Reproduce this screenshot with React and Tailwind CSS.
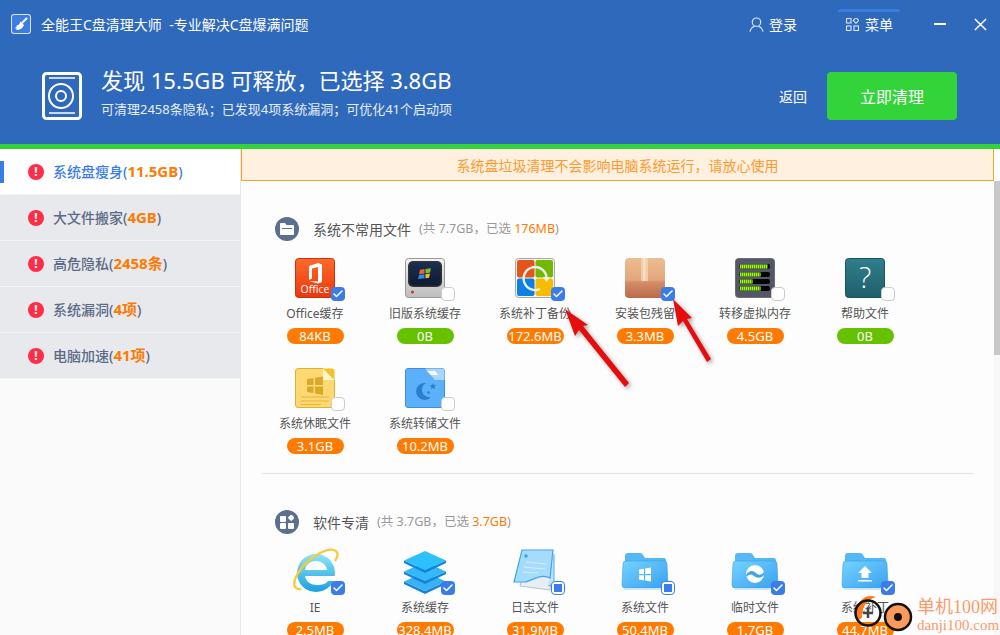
import { Check } from 'lucide-react';

const font = "font-['Noto_Sans','Noto_Sans_CJK_SC',sans-serif]";

const sideItems = [
  { name: '系统盘瘦身', num: '11.5GB', active: true },
  { name: '大文件搬家', num: '4GB' },
  { name: '高危隐私', num: '2458', unit: '条' },
  { name: '系统漏洞', num: '4', unit: '项' },
  { name: '电脑加速', num: '41', unit: '项' },
];

function OfficeIcon() {
  return (
    <svg viewBox="0 0 40 40" className="w-10 h-10">
      <defs>
        <linearGradient id="off" x1="0" y1="0" x2="0" y2="1">
          <stop offset="0" stopColor="#ff6a2a" />
          <stop offset="1" stopColor="#e8380e" />
        </linearGradient>
      </defs>
      <rect x="0.5" y="0.5" width="39" height="39" rx="3" fill="url(#off)" stroke="#d2300c" />
      <path d="M14 8 L23 5 L27 6.5 V24 L23 25.5 L14 23 L23 23.5 V9 L17 10.5 V20.5 L14 22 Z" fill="#fff" />
      <text x="20" y="35" textAnchor="middle" fontSize="10.5" fontWeight="500" fill="#fff" fontFamily="Open Sans">Office</text>
    </svg>
  );
}

function OldPcIcon() {
  return (
    <svg viewBox="0 0 40 40" className="w-10 h-10">
      <defs>
        <linearGradient id="pc" x1="0" y1="0" x2="0" y2="1">
          <stop offset="0" stopColor="#f2f2f2" />
          <stop offset="1" stopColor="#bdbdbd" />
        </linearGradient>
        <linearGradient id="scr" x1="0" y1="0" x2="0" y2="1">
          <stop offset="0" stopColor="#1b2f52" />
          <stop offset="1" stopColor="#0e1a30" />
        </linearGradient>
      </defs>
      <rect x="0.5" y="0.5" width="39" height="39" rx="3" fill="url(#pc)" stroke="#999" />
      <rect x="3" y="3" width="34" height="26" rx="5" fill="#333" />
      <rect x="4.5" y="4.5" width="31" height="23" rx="4" fill="url(#scr)" />
      <g transform="translate(0 3) scale(1 0.8)">
        <path d="M15 11 L19.5 10 V15.5 L14 16.5 Z" fill="#e8623a" />
        <path d="M20.5 10 L26 9 L25 14.5 L20.5 15.5 Z" fill="#7fbf2a" />
        <path d="M14 17.5 L19.5 16.5 V21.5 L13 22.5 Z" fill="#2f8ae8" />
        <path d="M20.5 16.5 L25 15.5 L24 21 L20.5 21.5 Z" fill="#f2c21a" />
      </g>
      <circle cx="7.5" cy="34" r="1.6" fill="#d23a2a" />
    </svg>
  );
}

function PatchIcon() {
  return (
    <svg viewBox="0 0 40 40" className="w-10 h-10">
      <rect x="0.5" y="0.5" width="39" height="39" rx="3" fill="#f4f4f4" stroke="#a8a8a8" />
      <rect x="2" y="2" width="17.5" height="17.5" rx="2" fill="#e5541a" />
      <rect x="20.5" y="2" width="17.5" height="17.5" rx="2" fill="#72b800" />
      <rect x="2" y="20.5" width="17.5" height="17.5" rx="2" fill="#0f7fe0" />
      <rect x="20.5" y="20.5" width="17.5" height="17.5" rx="2" fill="#f7bb00" />
      <path d="M31.5 19 A11.5 11.5 0 1 0 25 31" fill="none" stroke="#e9f2ee" strokeWidth="2.4" />
      <path d="M28 19 L35 19 L31.5 24 Z" fill="#e9f2ee" />
    </svg>
  );
}

function BoxIcon() {
  return (
    <svg viewBox="0 0 40 40" className="w-10 h-10">
      <defs>
        <linearGradient id="bx" x1="0" y1="0" x2="0" y2="1">
          <stop offset="0" stopColor="#edbd92" />
          <stop offset="0.55" stopColor="#e3a77c" />
          <stop offset="0.6" stopColor="#d58e68" />
          <stop offset="1" stopColor="#b96a4a" />
        </linearGradient>
      </defs>
      <rect width="40" height="40" rx="4" fill="url(#bx)" />
      <rect x="16" y="0" width="7" height="23" fill="#f4d3b2" fillOpacity="0.8" />
      <rect x="18" y="0" width="2.5" height="23" fill="#fff" fillOpacity="0.35" />
    </svg>
  );
}

function MemoryIcon() {
  const bars = [
    { y: 6, w: 28 },
    { y: 14, w: 21 },
    { y: 21, w: 13 },
    { y: 28, w: 21 },
  ];
  return (
    <svg viewBox="0 0 40 40" className="w-10 h-10">
      <rect x="0.5" y="0.5" width="39" height="39" rx="3" fill="#56566a" stroke="#6d6d7a" />
      {bars.map((b) => (
        <g key={b.y}>
          <rect x="4" y={b.y} width="31" height="5" rx="2" fill="#050505" />
          <rect x="4.5" y={b.y} width={b.w} height="5" fill="#3d7a08" />
          <line x1="5" x2={4.5 + b.w} y1={b.y + 2.5} y2={b.y + 2.5} stroke="#a6f02a" strokeWidth="3.4" strokeDasharray="1.3 0.7" />
        </g>
      ))}
    </svg>
  );
}

function HelpIcon() {
  return (
    <svg viewBox="0 0 40 40" className="w-10 h-10">
      <defs>
        <linearGradient id="hp" x1="0" y1="0" x2="0" y2="1">
          <stop offset="0" stopColor="#2f7f8c" />
          <stop offset="1" stopColor="#1f5f6b" />
        </linearGradient>
      </defs>
      <rect x="0.5" y="0.5" width="39" height="39" rx="3" fill="url(#hp)" stroke="#1b5560" />
      <text x="20" y="30" textAnchor="middle" fontSize="29" fontWeight="300" fill="#fff" fontFamily="Open Sans">?</text>
    </svg>
  );
}

function HibernateIcon() {
  return (
    <svg viewBox="0 0 40 40" className="w-10 h-10">
      <path d="M3 0.5 H28 L39.5 12 V37 A2.5 2.5 0 0 1 37 39.5 H3 A2.5 2.5 0 0 1 0.5 37 V3 A2.5 2.5 0 0 1 3 0.5 Z" fill="#ffd873" stroke="#e0b22e" />
      <path d="M28 0.5 L39.5 12 H28 Z" fill="#fff6c8" />
      <path d="M28 0.5 H37 A2.5 2.5 0 0 1 39.5 3 V12 Z" fill="#f5c02e" />
      <path d="M12 11 L18.5 10 V17 H12 Z M20 9.8 L28 8.5 V17 H20 Z M12 18.5 H18.5 V25 L12 24 Z M20 18.5 H28 V27 L20 25.4 Z" fill="#d8a92a" />
      <path d="M6 29 H34 M6 33 H34 M6 36.5 H26" stroke="#e2b640" strokeWidth="1" />
    </svg>
  );
}

function DumpIcon() {
  return (
    <svg viewBox="0 0 40 40" className="w-10 h-10">
      <path d="M3 0.5 H37 A2.5 2.5 0 0 1 39.5 3 V37 A2.5 2.5 0 0 1 37 39.5 H3 A2.5 2.5 0 0 1 0.5 37 V3 A2.5 2.5 0 0 1 3 0.5 Z" fill="#5cb0fa" stroke="#3f8fe0" />
      <path d="M20 0.5 H37 A2.5 2.5 0 0 1 39.5 3 V12 H30 Z" fill="#a9d6fb" />
      <path d="M22 3 H30 L33 7 H26 Z" fill="#fff" />
      <path d="M21 15 A8.5 8.5 0 1 0 26 29 A7.5 7.5 0 0 1 21 15 Z" fill="#2a7fd0" />
      <path d="M28 15 l.9 2 2.2 .3 -1.6 1.5 .4 2.2 -1.9 -1 -1.9 1 .4 -2.2 -1.6 -1.5 2.2 -.3 Z" fill="#2a7fd0" />
      <circle cx="23.5" cy="24.5" r="1.3" fill="#2a7fd0" />
    </svg>
  );
}

function IeIcon() {
  return (
    <svg viewBox="0 0 40 40" className="w-10 h-10 overflow-visible">
      <defs>
        <linearGradient id="ie" x1="0" y1="0" x2="0" y2="1">
          <stop offset="0" stopColor="#8fe4f7" />
          <stop offset="1" stopColor="#1b9fe0" />
        </linearGradient>
      </defs>
      <circle cx="21" cy="21" r="19" fill="url(#ie)" />
      <path d="M10 18 C11 12 16 9 21 9 C26 9 31 12 32 18 Z" fill="#fdfdfd" />
      <path d="M10 24 H42 V29 H33 C31 32 27 33 22 33 C16 33 11 30 10 24 Z" fill="#fdfdfd" />
      <path d="M6 37 C-2 38 -4 30 6 17 C16 4 34 -6 41 -1 C44 2 42 6 40 9" fill="none" stroke="#f7cc3a" strokeWidth="2.4" />
    </svg>
  );
}

function LayersIcon() {
  const tops = [26, 16, 5];
  const fills = ['#3ab0f5', '#35b8f8', '#2cc0ff'];
  return (
    <svg viewBox="0 0 46 46" className="w-[46px] h-[46px] -mt-[4px] -ml-[3px]">
      {tops.map((y, i) => (
        <g key={y}>
          <path d={`M23 ${y + 17} L44 ${y + 7.5} V${y + 10} L23 ${y + 20} L2 ${y + 10} V${y + 7.5} Z`} fill="#1384d8" />
          <path d={`M23 ${y - 2} L44 ${y + 7.5} L23 ${y + 17} L2 ${y + 7.5} Z`} fill={fills[i]} />
        </g>
      ))}
    </svg>
  );
}

function LogIcon() {
  return (
    <svg viewBox="0 0 46 46" className="w-[46px] h-[46px] -mt-[4px] -ml-[3px]">
      <path d="M8 38 L38 42 L42 12 L16 6 Z" fill="#e8eef4" stroke="#b5c4d2" />
      <path d="M42 6 L42 36 L36 38" fill="#bfe2fa" stroke="#55aef0" />
      <path d="M10 2 L41 2 L38 30 C30 26 24 30 14 34 L2 34 Z" fill="#a6dcfb" stroke="#3fa4f0" strokeWidth="1.2" />
      <path d="M14 14 L35 16 M12 19 L33 21 M11 24 L26 25" stroke="#d3eefc" strokeWidth="1" />
      <circle cx="14" cy="8" r="1.8" fill="#3fa4f0" />
    </svg>
  );
}

function FolderIcon({ children, id }) {
  return (
    <svg viewBox="0 0 48 40" className="w-[48px] h-10 -ml-1">
      <defs>
        <linearGradient id={id} x1="0" y1="0" x2="1" y2="1">
          <stop offset="0" stopColor="#74d3ff" />
          <stop offset="1" stopColor="#3aa0f0" />
        </linearGradient>
      </defs>
      <path d="M4 9 V4 A3 3 0 0 1 7 1 H19 A3 3 0 0 1 22 3 L24 6 H43 A2 2 0 0 1 45 8 V12 H4 Z" fill="#55b8f5" />
      <path d="M2 12 A3 3 0 0 1 5 9 H43 A3 3 0 0 1 46 12 L47 33 A3 3 0 0 1 44 36 H4 A3 3 0 0 1 1 33 Z" fill={`url(#${id})`} stroke="#3b9cea" strokeWidth="0.6" />
      <rect x="3" y="36" width="42" height="2" rx="1" fill="#cfe6f7" />
      {children}
    </svg>
  );
}

function WinFolder() {
  return (
    <FolderIcon id="f1">
      <path d="M18 17.5 L23 16.7 V22 H18 Z M24.2 16.5 L30 15.5 V22 H24.2 Z M18 23.2 H23 V28.4 L18 27.6 Z M24.2 23.2 H30 V29.6 L24.2 28.6 Z" fill="#fff" />
    </FolderIcon>
  );
}

function SwirlFolder() {
  return (
    <FolderIcon id="f2">
      <circle cx="24" cy="22" r="9" fill="#fff" />
      <path d="M15 23 C19 17 23 19 25 21 C28 24 31 23 33 20 L33 23 C29 27 26 26 23 24 C20 22 18 22 15.5 25 Z" fill="#3fa2ee" />
    </FolderIcon>
  );
}

function UploadFolder() {
  return (
    <FolderIcon id="f3">
      <path d="M24 14 L31 21 H27.5 V26 H20.5 V21 H17 Z" fill="#fff" />
      <rect x="17" y="28" width="14" height="1.5" fill="#fff" />
    </FolderIcon>
  );
}

const unusedFiles = [
  { name: 'Office缓存', size: '84KB', icon: OfficeIcon, state: 'on' },
  { name: '旧版系统缓存', size: '0B', icon: OldPcIcon, state: 'off', green: true },
  { name: '系统补丁备份', size: '172.6MB', icon: PatchIcon, state: 'on' },
  { name: '安装包残留', size: '3.3MB', icon: BoxIcon, state: 'on' },
  { name: '转移虚拟内存', size: '4.5GB', icon: MemoryIcon, state: 'off' },
  { name: '帮助文件', size: '0B', icon: HelpIcon, state: 'off', green: true },
  { name: '系统休眠文件', size: '3.1GB', icon: HibernateIcon, state: 'off' },
  { name: '系统转储文件', size: '10.2MB', icon: DumpIcon, state: 'off' },
];

const softFiles = [
  { name: 'IE', size: '2.5MB', icon: IeIcon, state: 'on' },
  { name: '系统缓存', size: '328.4MB', icon: LayersIcon, state: 'on' },
  { name: '日志文件', size: '31.9MB', icon: LogIcon, state: 'part' },
  { name: '系统文件', size: '50.4MB', icon: WinFolder, state: 'part' },
  { name: '临时文件', size: '1.7GB', icon: SwirlFolder, state: 'on' },
  { name: '系统补丁', size: '44.7MB', icon: UploadFolder, state: 'on' },
];

function Tick({ state }) {
  if (state === 'on') {
    return (
      <span className="absolute left-9 top-[29px] w-3.5 h-3.5 rounded-sm bg-[#3b7de8] flex items-center justify-center">
        <Check className="w-3 h-3 text-white" strokeWidth={3} />
      </span>
    );
  }
  if (state === 'part') {
    return (
      <span className="absolute left-9 top-[29px] w-3.5 h-3.5 rounded-sm bg-white border border-[#3b7de8] flex items-center justify-center">
        <span className="w-2 h-2 bg-[#3b7de8]" />
      </span>
    );
  }
  return <span className="absolute left-9 top-[29px] w-3.5 h-3.5 rounded-sm bg-white border border-[#cccccc]" />;
}

function FileItem({ item }) {
  const Icon = item.icon;
  return (
    <div className="flex flex-col items-center w-[110px]">
      <div className="relative w-10 h-10">
        <Icon />
        <Tick state={item.state} />
      </div>
      <div className="mt-2 h-4 leading-4 text-[12px] text-[#555555] whitespace-nowrap">{item.name}</div>
      <div className={`mt-1.5 w-[57px] h-4 rounded-full leading-4 text-center text-[13px] text-white ${item.green ? 'bg-[#66c200]' : 'bg-[#ff7a00]'}`}>
        {item.size}
      </div>
    </div>
  );
}

function SectionHead({ icon, title, total, picked }) {
  return (
    <div className="ml-[34px] flex items-center h-6">
      <span className="w-6 h-6 rounded-full bg-[#5b6f8f] flex items-center justify-center">{icon}</span>
      <span className="ml-3.5 text-[14px] text-[#555555]">{title}</span>
      <span className="ml-2 text-[12.5px] text-[#999999] whitespace-nowrap">
        (共 {total}，已选 <span className="text-[#ff7a00]">{picked}</span>)
      </span>
    </div>
  );
}

function Arrows() {
  return (
    <svg className="absolute left-0 top-0 w-[1000px] h-[635px] pointer-events-none drop-shadow-[2px_2px_2px_rgba(0,0,0,0.35)]" viewBox="0 0 1000 635">
      <path d="M565 309 L588 325 L583 326 L629 383 L625 387 L579 330 L575 336 Z" fill="#e60d0d" />
      <path d="M673 299 L692 318 L687 319 L711 359 L707 362 L683 321 L678 326 Z" fill="#e60d0d" />
    </svg>
  );
}

function Watermark() {
  return (
    <div className="absolute right-0 bottom-0 flex items-end pointer-events-none">
      <svg viewBox="0 0 66 44" className="w-[66px] h-11">
        <path d="M7 24 C8 10 18 2 28 6 C20 8 14 14 14 26 C12 30 8 30 7 24 Z" fill="#ff7a1a" />
        <circle cx="20" cy="22" r="12.5" fill="none" stroke="#111" strokeWidth="2.5" />
        <path d="M20 17 V27 M15 22 H25" stroke="#444" strokeWidth="2.5" />
        <circle cx="50" cy="26" r="13" fill="#fb9a5a" stroke="#111" strokeWidth="2.5" />
        <circle cx="50" cy="26" r="4" fill="#111" />
      </svg>
      <div className="ml-[3px] w-[83px] pb-[2px] text-[#fb9a6a] font-['Liberation_Serif','Noto_Sans_CJK_SC',serif] whitespace-nowrap">
        <div className="text-[18px] leading-5">单机100网</div>
        <div className="text-[15px] leading-4">danji100.com</div>
      </div>
    </div>
  );
}

export default function App() {
  return (
    <div className={`relative w-[1000px] h-[635px] overflow-hidden flex flex-col bg-white ${font}`}>
      <header className="h-[149px] shrink-0 bg-[#2f69bb] border-b-[5px] border-[#32d43a] text-white flex flex-col">
        <div className="h-12 flex items-center pl-[11px]">
          <span className="w-5 h-5 rounded-[3px] border border-white/80 bg-[#3b7de0] flex items-center justify-center">
            <svg viewBox="0 0 16 16" className="w-4 h-4">
              <path d="M14 2 L9 7" stroke="#fff" strokeWidth="2" />
              <path d="M7.5 5.5 L11 9 C10 12 7 14 3 14 C5 12.5 3 13 2 12 C4 11 3.5 10.5 3.5 9.5 C5.5 9.5 6.5 8 7.5 5.5 Z" fill="#fff" />
            </svg>
          </span>
          <span className="ml-[10px] text-[14px] whitespace-pre">全能王C盘清理大师  -专业解决C盘爆满问题</span>
          <div className="ml-auto flex items-center">
            <svg viewBox="0 0 16 16" className="w-[15px] h-[15px]" fill="none" stroke="#dbe7f7" strokeWidth="1.2">
              <circle cx="8" cy="5.5" r="4.5" />
              <path d="M1 15.5 C2 11.5 5 10 6 10 M15 15.5 C14 11.5 11 10 10 10" />
            </svg>
            <span className="ml-[5px] text-[14px]">登录</span>
            <div className="relative ml-[49px] flex items-center">
              <span className="absolute -left-2 -top-[5px] w-[62px] h-[3px] rounded-t-full bg-[#3a7de0]" />
              <svg viewBox="0 0 13 13" className="w-[13px] h-[13px]" fill="none" stroke="#dbe7f7" strokeWidth="1.1">
                <rect x="0.5" y="0.5" width="4.5" height="4.5" />
                <rect x="8" y="0.5" width="4" height="4" transform="rotate(45 10 2.5)" />
                <rect x="0.5" y="8" width="4.5" height="4.5" />
                <rect x="8" y="8" width="4.5" height="4.5" />
              </svg>
              <span className="ml-[6px] text-[14px]">菜单</span>
            </div>
            <span className="ml-[41px] w-3 h-[2px] bg-white" />
            <svg viewBox="0 0 14 14" className="ml-7 mr-[13px] w-[13px] h-[13px]" stroke="#fff" strokeWidth="1.6">
              <path d="M1 1 L13 13 M13 1 L1 13" />
            </svg>
          </div>
        </div>
        <div className="mt-6 flex items-start pl-[42px] pr-[43px]">
          <svg viewBox="0 0 40 48" className="w-10 h-12" fill="none" stroke="#fff">
            <rect x="1.5" y="1.5" width="37" height="45" rx="3" strokeWidth="3" />
            <path d="M7 6 H33 M7 41 H33" strokeWidth="1.6" />
            <circle cx="19" cy="24" r="12" strokeWidth="2" />
            <circle cx="19" cy="24" r="5" strokeWidth="2" />
          </svg>
          <div className="ml-[19px] flex flex-col">
            <div className="text-[22px] leading-[26px] -mt-[5px] whitespace-nowrap">发现 15.5GB 可释放，已选择 3.8GB</div>
            <div className="text-[13px] leading-[18px] mt-[7px] text-[#e6eefa] whitespace-nowrap">可清理2458条隐私；已发现4项系统漏洞；可优化41个启动项</div>
          </div>
          <span className="ml-auto mt-[15px] text-[14px] leading-[20px]">返回</span>
          <button className="ml-5 w-[130px] h-12 pt-0.5 rounded bg-[#32d43a] text-[16px] text-white">立即清理</button>
        </div>
      </header>

      <div className="flex-1 min-h-0 flex">
        <aside className="w-[241px] shrink-0 bg-[#fafafa] border-r border-[#e8e9ed]">
          {sideItems.map((s) => (
            <div
              key={s.name}
              className={`relative h-[46px] flex items-center pl-7 border-b border-[#f1f2f4] ${s.active ? 'bg-white' : 'bg-[#e8e9ed]'}`}
            >
              {s.active && <span className="absolute left-0 top-3 w-1 h-[22px] bg-[#3b7de8]" />}
              <span className="w-4 h-4 rounded-full bg-[#ff2d46] text-white text-[12px] font-bold leading-4 text-center">!</span>
              <span className={`ml-[9px] text-[14px] font-medium whitespace-nowrap ${s.active ? 'text-[#3b7de8]' : 'text-[#5b6b85]'}`}>
                {s.name}(<span className="text-[15px] text-[#ff7a00] font-bold">{s.num}{s.unit}</span>)
              </span>
            </div>
          ))}
        </aside>

        <div className="flex-1 min-w-0 flex flex-col">
          <div className="h-8 shrink-0 bg-[#fff0e0] border-b border-l border-r border-[#f5a623] mr-[6px] text-center leading-[33px] text-[14px] text-[#ff9a2e]">
            系统盘垃圾清理不会影响电脑系统运行，请放心使用
          </div>
          <div className="flex-1 min-h-0 flex">
            <main className="flex-1 min-w-0 bg-[#fdfdfd] pt-9 overflow-hidden">
              <SectionHead
                title="系统不常用文件"
                total="7.7GB"
                picked="176MB"
                icon={
                  <svg viewBox="0 0 14 12" className="w-3.5 h-3" fill="#fff">
                    <path d="M1 0 H5 L6.5 2 H13 A1 1 0 0 1 14 3 V11 A1 1 0 0 1 13 12 H1 A1 1 0 0 1 0 11 V1 A1 1 0 0 1 1 0 Z M2 5 V6 H12 V5 Z" fillRule="evenodd" />
                  </svg>
                }
              />
              <div className="mt-[17px] ml-[19px] grid grid-cols-[repeat(6,110px)] gap-y-6">
                {unusedFiles.map((f) => <FileItem key={f.name} item={f} />)}
              </div>
              <div className="mt-[19px] ml-[21px] mr-5 h-px bg-[#e5e5e5]" />
              <div className="mt-9">
                <SectionHead
                  title="软件专清"
                  total="3.7GB"
                  picked="3.7GB"
                  icon={
                    <svg viewBox="0 0 14 14" className="w-3.5 h-3.5" fill="#fff">
                      <rect x="0" y="1" width="6" height="6" rx="1" />
                      <rect x="8" y="0" width="5" height="5" rx="1" transform="rotate(45 10.5 3.5)" />
                      <rect x="0" y="8" width="6" height="6" rx="1" />
                      <rect x="8" y="8" width="6" height="6" rx="1" />
                    </svg>
                  }
                />
                <div className="mt-[18px] ml-[19px] grid grid-cols-[repeat(6,110px)]">
                  {softFiles.map((f) => <FileItem key={f.name} item={f} />)}
                </div>
              </div>
            </main>
            <div className="w-[6px] shrink-0 bg-[#f7f7f7]">
              <div className="h-[174px] bg-[#c8c8c8]" />
            </div>
          </div>
        </div>
      </div>

      <Arrows />
      <Watermark />
    </div>
  );
}
